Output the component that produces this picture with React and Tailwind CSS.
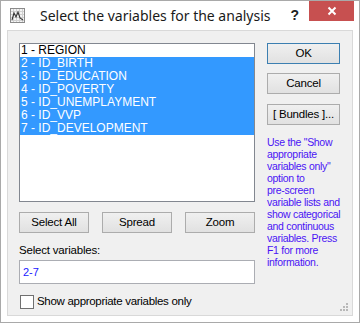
import React from "react";

const vars = [
  "1 - REGION",
  "2 - ID_BIRTH",
  "3 - ID_EDUCATION",
  "4 - ID_POVERTY",
  "5 - ID_UNEMPLAYMENT",
  "6 - ID_VVP",
  "7 - ID_DEVELOPMENT",
];

const hint = [
  'Use the "Show',
  "appropriate",
  'variables only"',
  "option to",
  "pre-screen",
  "variable lists and",
  "show categorical",
  "and continuous",
  "variables. Press",
  "F1 for more",
  "information.",
];

const Btn = ({ children, className = "", focused }) => (
  <button
    className={
      "flex items-center justify-center bg-gradient-to-b from-[#f0f0f0] to-[#e1e1e1] text-[11.5px] tracking-[-0.2px] text-black leading-none " +
      (focused ? "border border-[#3c7fb1] " : "border border-[#acacac] ") +
      className
    }
  >
    {children}
  </button>
);

const TitleIcon = () => (
  <svg width="15" height="15" viewBox="0 0 15 15" className="shrink-0">
    <rect x="0.5" y="0.5" width="14" height="14" fill="#f4f4f4" stroke="#8a8a8a" />
    {[3, 6, 9, 12].map((v) => (
      <g key={v}>
        <line x1={v + 0.5} y1="1" x2={v + 0.5} y2="14" stroke="#d0d0d0" />
        <line x1="1" y1={v + 0.5} x2="14" y2={v + 0.5} stroke="#d0d0d0" />
      </g>
    ))}
    <polyline points="2,12 4,5 6,9 8,4 10,10 13,12" fill="none" stroke="#333" strokeWidth="1.1" />
  </svg>
);

const Grip = () => (
  <svg width="10" height="10" viewBox="0 0 10 10" className="absolute right-[3px] bottom-[3px]">
    {[
      [7, 1],
      [4, 4],
      [7, 4],
      [1, 7],
      [4, 7],
      [7, 7],
    ].map(([x, y]) => (
      <rect key={x + "-" + y} x={x} y={y} width="2" height="2" fill="#b8b8b8" />
    ))}
  </svg>
);

export default function App() {
  return (
    <div
      className="w-[360px] h-[323px] bg-white border border-[#a9a9a9] flex flex-col"
      style={{ fontFamily: "'Liberation Sans', Arial, sans-serif" }}
    >
      {/* title bar */}
      <div className="h-[29px] flex items-start shrink-0">
        <div className="flex items-center h-[29px] pl-[9px]">
          <TitleIcon />
          <span
            className="ml-[15px] text-[14px] text-[#1a1a1a]"
            style={{ fontFamily: "'Noto Sans', 'Open Sans', sans-serif" }}
          >
            Select the variables for the analysis
          </span>
        </div>
        <div className="ml-auto flex items-start">
          <span className="mt-[4px] mr-[10px] text-[14px] font-bold text-[#222]">?</span>
          <div className="w-[45px] h-[20px] bg-[#c75050] flex items-center justify-center mr-[5px]">
            <svg width="10" height="10" viewBox="0 0 10 10">
              <path d="M1.5 1.5 L8.5 8.5 M8.5 1.5 L1.5 8.5" stroke="#fff" strokeWidth="2" />
            </svg>
          </div>
        </div>
      </div>

      {/* client area */}
      <div className="relative mx-[6px] h-[286px] border border-[#d9d9d9] bg-[#f0f0f0] pl-[11px] pt-[12px] flex gap-[12px]">
        <div className="w-[236px] flex flex-col">
          <div className="h-[159px] border border-[#828790] bg-white">
            {vars.map((v, i) => (
              <div
                key={v}
                className={
                  "h-[13px] leading-[13px] text-[12px] pl-[1px] " +
                  (i === 0 ? "text-black" : "bg-[#3399ff] text-white")
                }
              >
                {v}
              </div>
            ))}
          </div>
          <div className="mt-[10px] flex justify-between">
            <Btn className="w-[70px] h-[21px]">Select All</Btn>
            <Btn className="w-[70px] h-[21px]">Spread</Btn>
            <Btn className="w-[70px] h-[21px]">Zoom</Btn>
          </div>
          <div className="mt-[10px] text-[11.5px] tracking-[-0.2px] text-black leading-[14px]">Select variables:</div>
          <div className="mt-[3px] h-[24px] border border-[#abadb3] bg-white text-[11px] text-[#2020ff] pl-[3px] flex items-center">
            2-7
          </div>
          <label className="mt-[9px] flex items-center text-[11.5px] tracking-[-0.3px] text-black">
            <span className="w-[14px] h-[14px] border border-[#707070] bg-white ml-[1px]" />
            <span className="ml-[3px]">Show appropriate variables only</span>
          </label>
        </div>

        <div className="w-[73px] flex flex-col">
          <Btn focused className="h-[21px]">OK</Btn>
          <Btn className="h-[21px] mt-[9px]">Cancel</Btn>
          <Btn className="h-[21px] mt-[10px]">[ Bundles ]...</Btn>
          <div className="mt-[11px] text-[10.5px] leading-[12px] tracking-[-0.3px] text-[#4a14f5] whitespace-nowrap">
            {hint.map((l) => (
              <div key={l}>{l}</div>
            ))}
          </div>
        </div>
        <Grip />
      </div>
    </div>
  );
}
